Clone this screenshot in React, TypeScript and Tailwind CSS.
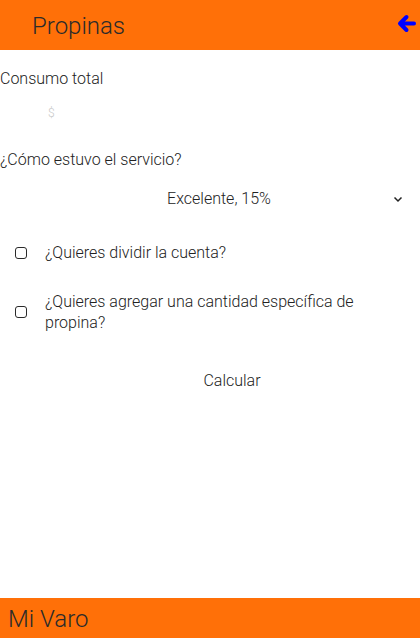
const FONT = { fontFamily: 'Roboto, "Liberation Sans", sans-serif' }

function Check({ label }: { label: string }) {
  return (
    <label className="flex items-center pr-[40px]">
      <input
        type="checkbox"
        className="appearance-none shrink-0 ml-[15px] w-[12px] h-[12px] border-[1.5px] border-[#2a2a2a] rounded-[3px] bg-white"
      />
      <span className="ml-[18px] text-[16px] leading-[21px]">{label}</span>
    </label>
  )
}

export default function App() {
  return (
    <div className="h-[638px] w-full flex flex-col bg-white text-[#222] font-light" style={FONT}>
      <header className="h-[50px] shrink-0 bg-[#ff7008] flex items-center justify-between pl-[32px] pr-[3px]">
        <h1 className="text-[24px] leading-[30px] font-light text-[#2b2b2b] mt-[1px]">Propinas</h1>
        <button className="p-0 mb-[3px]">
          <svg width="21" height="21" viewBox="0 0 21 21">
            <path
              d="M18 10.5 H4.5 M10.5 4 L4 10.5 L10.5 17"
              fill="none"
              stroke="#0000ff"
              strokeWidth="4"
              strokeLinecap="round"
              strokeLinejoin="round"
            />
          </svg>
        </button>
      </header>

      <main className="flex-1 flex flex-col">
        <p className="mt-[17px] text-[16px] leading-[24px]">Consumo total</p>
        <div className="h-[44px] flex items-center pl-[48px]">
          <span className="text-[12px] text-[#c8c8c8]">$</span>
        </div>

        <p className="mt-[13px] text-[16px] leading-[24px]">¿Cómo estuvo el servicio?</p>
        <div className="h-[54px] flex items-center">
          <span className="ml-[48px] flex-1 text-center text-[16px] leading-[24px]">Excelente, 15%</span>
          <svg className="ml-[3px] mr-[17px]" width="10" height="7" viewBox="0 0 10 7">
            <path d="M1.5 1.5 L5 5 L8.5 1.5" fill="none" stroke="#222" strokeWidth="1.5" />
          </svg>
        </div>

        <div className="h-[53px] flex items-center">
          <Check label="¿Quieres dividir la cuenta?" />
        </div>
        <div className="pt-[12px]">
          <Check label="¿Quieres agregar una cantidad específica de propina?" />
        </div>

        <button className="mt-[36px] ml-[44px] text-center text-[16px] leading-[24px] font-light">
          Calcular
        </button>
      </main>

      <footer className="h-[40px] shrink-0 bg-[#ff7008] flex items-center pl-[8px]">
        <span className="text-[24px] leading-[30px] text-[#2b2b2b] mt-[2px]">Mi Varo</span>
      </footer>
    </div>
  )
}
